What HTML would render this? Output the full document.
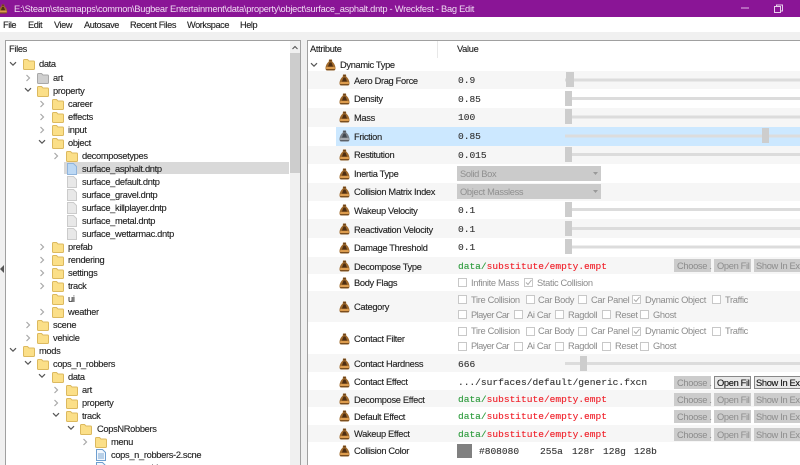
<!DOCTYPE html>
<html><head><meta charset="utf-8"><title>Bag Edit</title>
<style>
html,body{margin:0;padding:0;background:#fff;overflow:hidden;width:800px;height:465px}
svg{display:block;filter:blur(.3px)}
text{font-family:"Liberation Sans",sans-serif;font-size:9.3px;fill:#222;stroke:#222;stroke-width:.12px;letter-spacing:-.33px}
.m{font-family:"Liberation Mono",monospace;font-size:9.55px;letter-spacing:0;fill:#333;stroke:#333}
.g{fill:#2a9a3a;stroke:#2a9a3a}.r{fill:#f0202a;stroke:#f0202a}
.d{fill:#8f8f8f;stroke:none}
.b{fill:#8c8c8c;stroke:none}.k{fill:#111;stroke:#111}
.pc{letter-spacing:-.6px}
.mn{font-size:9.2px;letter-spacing:-.42px}
</style></head><body>
<svg width="800" height="465" viewBox="0 0 800 465" xmlns="http://www.w3.org/2000/svg">
<defs>
<symbol id="f" viewBox="0 0 12 12"><path d="M.5 2.500q0-1 1-1h3l1.500 1.500h4.500q1 0 1 1v6.500q0 1-1 1h-9q-1 0-1-1z" fill="#fbdf88" stroke="#dcb95e"/></symbol>
<symbol id="h" viewBox="0 0 12 12"><path d="M.5 2.500q0-1 1-1h3l1.500 1.500h4.500q1 0 1 1v6.500q0 1-1 1h-9q-1 0-1-1z" fill="#d0d0d0" stroke="#a8a8a8"/></symbol>
<symbol id="p" viewBox="0 0 10 12"><path d="M.5.500h6l3 3v8h-9z" fill="#e8e8e8" stroke="#cbcbcb"/></symbol>
<symbol id="q" viewBox="0 0 10 12"><path d="M.5.500h6l3 3v8h-9z" fill="#bcd8f4" stroke="#8fb4dc"/></symbol>
<symbol id="s" viewBox="0 0 10 12"><path d="M.5.500h6l3 3v8h-9z" fill="#f2f7fd" stroke="#6e9fd0"/><path d="M2 5h6M2 7h6M2 9h6" stroke="#7ea8d4"/></symbol>
<symbol id="a" viewBox="0 0 11 12"><path d="M4 .5h3l.3 2.300c1.700 1 3.200 4 3.200 6.700 0 1.300-.8 2-2 2h-6c-1.200 0-2-.7-2-2 0-2.700 1.500-5.700 3.200-6.700z" fill="#a06a2c"/><path d="M4.500 3.500h2l1.500 4h-5z" fill="#4e2e12"/><path d="M4.300 .7h2.400v1.600h-2.400z" fill="#6b4218"/><path d="M1.300 8h8.400l.2 2h-8.800z" fill="#dc9c4e"/><path d="M1.200 10.300h8.600v.9h-8.600z" fill="#6b4218"/></symbol>
<symbol id="z" viewBox="0 0 11 12"><path d="M4 .5h3l.3 2.300c1.700 1 3.200 4 3.200 6.700 0 1.300-.8 2-2 2h-6c-1.200 0-2-.7-2-2 0-2.700 1.500-5.700 3.200-6.700z" fill="#7a7f86"/><path d="M4.500 3.500h2l1.500 4h-5z" fill="#43484f"/><path d="M4.300 .7h2.400v1.600h-2.400z" fill="#50555c"/><path d="M1.300 8h8.400l.2 2h-8.800z" fill="#a4a8ae"/><path d="M1.200 10.300h8.600v.9h-8.600z" fill="#50555c"/></symbol>
<symbol id="v" viewBox="0 0 8 6"><path d="M1 1.200l3 3 3-3" fill="none" stroke="#555" stroke-width="1.200"/></symbol>
<symbol id="n" viewBox="0 0 6 8"><path d="M1.500 1l3 3-3 3" fill="none" stroke="#a8a8a8" stroke-width="1.200"/></symbol>
<symbol id="c" viewBox="0 0 9 9"><rect x=".5" y=".5" width="8" height="8" fill="#fff" stroke="#c8c8c8"/></symbol>
<symbol id="x" viewBox="0 0 9 9"><rect x=".5" y=".5" width="8" height="8" fill="#fff" stroke="#c8c8c8"/><path d="M2 4.500l2 2 3.500-4.500" fill="none" stroke="#aaa"/></symbol>
</defs>

<!-- title bar -->
<rect width="800" height="17" fill="#8a1596"/>
<use href="#a" x="-2" y="4" width="10" height="10"/>
<text x="14" y="12" style="fill:#f0dcf2;stroke:none;font-size:9.300px;letter-spacing:-.26px">E:\Steam\steamapps\common\Bugbear Entertainment\data\property\object\surface_asphalt.dntp - Wreckfest - Bag Edit</text>
<rect x="741" y="7.500" width="8" height="1" fill="#e0b8e4"/>
<path d="M774.500 6.500h6v6h-6zM776.500 6.500v-1.500h6v6h-2" fill="none" stroke="#e8cfeb"/>

<!-- menu -->
<rect y="17" width="800" height="15" fill="#fff"/>
<rect y="32" width="800" height="8" fill="#f0f0f0"/>
<text x="3" y="28" class="mn">File</text><text x="28" y="28" class="mn">Edit</text><text x="54" y="28" class="mn">View</text><text x="84" y="28" class="mn">Autosave</text><text x="130" y="28" class="mn">Recent Files</text><text x="187" y="28" class="mn">Workspace</text><text x="240" y="28" class="mn">Help</text>

<!-- side background -->
<rect x="0" y="40" width="5" height="425" fill="#f0f0f0"/>
<rect x="301" y="40" width="6" height="425" fill="#f0f0f0"/>
<path d="M4 265v8l-4-4z" fill="#555"/>

<!-- left panel -->
<rect x="5" y="40" width="296" height="1" fill="#a0a0a0"/>
<rect x="5" y="40" width="1" height="425" fill="#a0a0a0"/>
<rect x="300" y="40" width="1" height="425" fill="#a0a0a0"/>
<rect x="290" y="41" width="10" height="424" fill="#f0f0f0"/>
<rect x="290" y="53" width="10" height="120" fill="#cdcdcd"/>
<path d="M292.500 49l2.500-2.500 2.500 2.500" fill="none" stroke="#555" stroke-width="1.100"/>
<text x="9" y="52">Files</text>
<rect x="64" y="162" width="225" height="12" fill="#d9d9d9"/>

<use href="#v" x="9" y="61" width="8" height="6"/><use href="#f" x="23" y="58" width="12" height="12"/><text x="39" y="67">data</text>
<use href="#n" x="25" y="74" width="6" height="8"/><use href="#h" x="37" y="72" width="12" height="12"/><text x="53" y="81">art</text>
<use href="#v" x="24" y="87" width="8" height="6"/><use href="#f" x="37" y="85" width="12" height="12"/><text x="53" y="94">property</text>
<use href="#n" x="39" y="100" width="6" height="8"/><use href="#f" x="52" y="98" width="12" height="12"/><text x="68" y="107">career</text>
<use href="#n" x="39" y="113" width="6" height="8"/><use href="#f" x="52" y="111" width="12" height="12"/><text x="68" y="120">effects</text>
<use href="#n" x="39" y="126" width="6" height="8"/><use href="#f" x="52" y="124" width="12" height="12"/><text x="68" y="133">input</text>
<use href="#v" x="38" y="139" width="8" height="6"/><use href="#f" x="52" y="137" width="12" height="12"/><text x="68" y="146">object</text>
<use href="#n" x="53" y="152" width="6" height="8"/><use href="#f" x="66" y="150" width="12" height="12"/><text x="82" y="159">decomposetypes</text>
<use href="#q" x="67" y="163" width="10" height="12"/><text x="82" y="172">surface_asphalt.dntp</text>
<use href="#p" x="67" y="176" width="10" height="12"/><text x="82" y="185">surface_default.dntp</text>
<use href="#p" x="67" y="189" width="10" height="12"/><text x="82" y="198">surface_gravel.dntp</text>
<use href="#p" x="67" y="202" width="10" height="12"/><text x="82" y="211">surface_killplayer.dntp</text>
<use href="#p" x="67" y="215" width="10" height="12"/><text x="82" y="224">surface_metal.dntp</text>
<use href="#p" x="67" y="228" width="10" height="12"/><text x="82" y="237">surface_wettarmac.dntp</text>
<use href="#n" x="39" y="243" width="6" height="8"/><use href="#f" x="52" y="241" width="12" height="12"/><text x="68" y="250">prefab</text>
<use href="#n" x="39" y="256" width="6" height="8"/><use href="#f" x="52" y="254" width="12" height="12"/><text x="68" y="263">rendering</text>
<use href="#n" x="39" y="269" width="6" height="8"/><use href="#f" x="52" y="267" width="12" height="12"/><text x="68" y="276">settings</text>
<use href="#n" x="39" y="282" width="6" height="8"/><use href="#f" x="52" y="280" width="12" height="12"/><text x="68" y="289">track</text>
<use href="#f" x="52" y="293" width="12" height="12"/><text x="68" y="302">ui</text>
<use href="#n" x="39" y="308" width="6" height="8"/><use href="#f" x="52" y="306" width="12" height="12"/><text x="68" y="315">weather</text>
<use href="#n" x="25" y="321" width="6" height="8"/><use href="#f" x="37" y="319" width="12" height="12"/><text x="53" y="328">scene</text>
<use href="#n" x="25" y="334" width="6" height="8"/><use href="#f" x="37" y="332" width="12" height="12"/><text x="53" y="341">vehicle</text>
<use href="#v" x="9" y="347" width="8" height="6"/><use href="#f" x="23" y="345" width="12" height="12"/><text x="39" y="354">mods</text>
<use href="#v" x="24" y="360" width="8" height="6"/><use href="#f" x="37" y="358" width="12" height="12"/><text x="53" y="367">cops_n_robbers</text>
<use href="#v" x="38" y="373" width="8" height="6"/><use href="#f" x="52" y="371" width="12" height="12"/><text x="68" y="380">data</text>
<use href="#n" x="53" y="386" width="6" height="8"/><use href="#f" x="66" y="384" width="12" height="12"/><text x="82" y="393">art</text>
<use href="#n" x="53" y="399" width="6" height="8"/><use href="#f" x="66" y="397" width="12" height="12"/><text x="82" y="406">property</text>
<use href="#v" x="52" y="412" width="8" height="6"/><use href="#f" x="66" y="410" width="12" height="12"/><text x="82" y="419">track</text>
<use href="#v" x="67" y="425" width="8" height="6"/><use href="#f" x="80" y="423" width="12" height="12"/><text x="97" y="432">CopsNRobbers</text>
<use href="#n" x="82" y="438" width="6" height="8"/><use href="#f" x="95" y="436" width="12" height="12"/><text x="111" y="445">menu</text>
<use href="#s" x="96" y="449" width="10" height="12"/><text x="111" y="458">cops_n_robbers-2.scne</text>
<use href="#s" x="96" y="462" width="10" height="12"/><text x="111" y="471">cops_n_robbers.scne</text>

<!-- right panel -->
<rect x="307" y="40" width="493" height="1" fill="#a0a0a0"/>
<rect x="307" y="40" width="1" height="425" fill="#a0a0a0"/>
<rect x="437" y="41" width="1" height="17" fill="#e8e8e8"/>
<text x="310" y="52">Attribute</text><text x="457" y="52">Value</text>
<use href="#v" x="310" y="62" width="8" height="6"/><use href="#a" x="325" y="59" width="11" height="12"/><text x="340" y="68">Dynamic Type</text>

<!-- striped rows -->
<g fill="#f6f6f6">
<rect x="308" y="71" width="492" height="18"/><rect x="308" y="108" width="492" height="19"/><rect x="308" y="146" width="492" height="18"/><rect x="308" y="183" width="492" height="18"/><rect x="308" y="219" width="492" height="19"/><rect x="308" y="257" width="492" height="17"/><rect x="308" y="291" width="492" height="31"/><rect x="308" y="354" width="492" height="18"/><rect x="308" y="390" width="492" height="17"/><rect x="308" y="425" width="492" height="17"/>
</g>
<rect x="336" y="127" width="464" height="19" fill="#cce8ff"/>

<!-- sliders -->
<g fill="#dcdcdc">
<rect x="565" y="78.500" width="235" height="3"/><rect x="565" y="97" width="235" height="3"/><rect x="565" y="115.500" width="235" height="3"/><rect x="565" y="134.500" width="235" height="3"/><rect x="565" y="153" width="235" height="3"/><rect x="565" y="208" width="235" height="3"/><rect x="565" y="227" width="235" height="3"/><rect x="565" y="245.500" width="235" height="3"/><rect x="565" y="362" width="235" height="3"/>
</g>
<g fill="#cdcdcd">
<rect x="566" y="72" width="8" height="15"/><rect x="565" y="91" width="7" height="15"/><rect x="565" y="109" width="7" height="15"/><rect x="762" y="128" width="7" height="15"/><rect x="565" y="147" width="7" height="15"/><rect x="565" y="202" width="7" height="15"/><rect x="565" y="221" width="7" height="15"/><rect x="565" y="239" width="7" height="15"/><rect x="580" y="356" width="7" height="15"/>
</g>

<!-- attributes -->
<use href="#a" x="339" y="74" width="11" height="12"/><text x="354" y="84">Aero Drag Force</text><text class="m" x="458" y="83">0.9</text>
<use href="#a" x="339" y="93" width="11" height="12"/><text x="354" y="102">Density</text><text class="m" x="458" y="102">0.85</text>
<use href="#a" x="339" y="111" width="11" height="12"/><text x="354" y="121">Mass</text><text class="m" x="458" y="120">100</text>
<use href="#z" x="339" y="130" width="11" height="12"/><text x="354" y="140">Friction</text><text class="m" x="458" y="139">0.85</text>
<use href="#a" x="339" y="149" width="11" height="12"/><text x="354" y="158">Restitution</text><text class="m" x="458" y="158">0.015</text>
<use href="#a" x="339" y="168" width="11" height="12"/><text x="354" y="177">Inertia Type</text>
<rect x="457" y="166" width="144" height="15" fill="#cbcbcb"/><text class="d" x="460" y="177">Solid Box</text><path d="M593 172l2.500 3 2.500-3z" fill="#999"/>
<use href="#a" x="339" y="186" width="11" height="12"/><text x="354" y="195">Collision Matrix Index</text>
<rect x="457" y="184" width="144" height="15" fill="#cbcbcb"/><text class="d" x="460" y="195">Object Massless</text><path d="M593 190l2.500 3 2.500-3z" fill="#999"/>
<use href="#a" x="339" y="204" width="11" height="12"/><text x="354" y="214">Wakeup Velocity</text><text class="m" x="458" y="213">0.1</text>
<use href="#a" x="339" y="223" width="11" height="12"/><text x="354" y="233">Reactivation Velocity</text><text class="m" x="458" y="232">0.1</text>
<use href="#a" x="339" y="242" width="11" height="12"/><text x="354" y="251">Damage Threshold</text><text class="m" x="458" y="250">0.1</text>
<use href="#a" x="339" y="260" width="11" height="12"/><text x="354" y="270">Decompose Type</text><text class="m" x="458" y="269"><tspan class="g">data/</tspan><tspan class="r">substitute/empty.empt</tspan></text>
<use href="#a" x="339" y="277" width="11" height="12"/><text x="354" y="286">Body Flags</text>
<use href="#a" x="339" y="301" width="11" height="12"/><text x="354" y="310">Category</text>
<use href="#a" x="339" y="333" width="11" height="12"/><text x="354" y="342">Contact Filter</text>
<use href="#a" x="339" y="358" width="11" height="12"/><text x="354" y="367">Contact Hardness</text><text class="m" x="458" y="367">666</text>
<use href="#a" x="339" y="376" width="11" height="12"/><text x="354" y="385">Contact Effect</text><text class="m" x="458" y="385">.../surfaces/default/generic.fxcn</text>
<use href="#a" x="339" y="393" width="11" height="12"/><text x="354" y="403">Decompose Effect</text><text class="m" x="458" y="402"><tspan class="g">data/</tspan><tspan class="r">substitute/empty.empt</tspan></text>
<use href="#a" x="339" y="410" width="11" height="12"/><text x="354" y="420">Default Effect</text><text class="m" x="458" y="419"><tspan class="g">data/</tspan><tspan class="r">substitute/empty.empt</tspan></text>
<use href="#a" x="339" y="428" width="11" height="12"/><text x="354" y="437">Wakeup Effect</text><text class="m" x="458" y="437"><tspan class="g">data/</tspan><tspan class="r">substitute/empty.empt</tspan></text>
<use href="#a" x="339" y="445" width="11" height="12"/><text x="354" y="454">Collision Color</text>
<rect x="457" y="444" width="15" height="14" fill="#808080"/>
<text class="m" x="479" y="454">#808080</text><text class="m" x="540" y="454">255a</text><text class="m" x="572" y="454">128r</text><text class="m" x="603" y="454">128g</text><text class="m" x="634" y="454">128b</text>

<!-- checkboxes -->
<use href="#c" x="458" y="278" width="9" height="9"/><text class="b" x="471" y="286">Infinite Mass</text>
<use href="#x" x="524" y="278" width="9" height="9"/><text class="b" x="537" y="286">Static Collision</text>

<use href="#c" x="458" y="295" width="9" height="9"/><text class="b" x="471" y="303">Tire Collision</text>
<use href="#c" x="526" y="295" width="9" height="9"/><text class="b" x="538" y="303">Car Body</text>
<use href="#c" x="578" y="295" width="9" height="9"/><text class="b" x="591" y="303">Car Panel</text>
<use href="#x" x="632" y="295" width="9" height="9"/><text class="b" x="645" y="303">Dynamic Object</text>
<use href="#c" x="712" y="295" width="9" height="9"/><text class="b" x="725" y="303">Traffic</text>
<use href="#c" x="458" y="310" width="9" height="9"/><text class="b pc" x="471" y="318">Player Car</text>
<use href="#c" x="514" y="310" width="9" height="9"/><text class="b" x="527" y="318">Ai Car</text>
<use href="#c" x="555" y="310" width="9" height="9"/><text class="b" x="568" y="318">Ragdoll</text>
<use href="#c" x="602" y="310" width="9" height="9"/><text class="b" x="615" y="318">Reset</text>
<use href="#c" x="640" y="310" width="9" height="9"/><text class="b" x="653" y="318">Ghost</text>

<use href="#c" x="458" y="327" width="9" height="9"/><text class="b" x="471" y="334">Tire Collision</text>
<use href="#c" x="526" y="327" width="9" height="9"/><text class="b" x="538" y="334">Car Body</text>
<use href="#c" x="578" y="327" width="9" height="9"/><text class="b" x="591" y="334">Car Panel</text>
<use href="#x" x="632" y="327" width="9" height="9"/><text class="b" x="645" y="334">Dynamic Object</text>
<use href="#c" x="712" y="327" width="9" height="9"/><text class="b" x="725" y="334">Traffic</text>
<use href="#c" x="458" y="342" width="9" height="9"/><text class="b pc" x="471" y="349">Player Car</text>
<use href="#c" x="514" y="342" width="9" height="9"/><text class="b" x="527" y="349">Ai Car</text>
<use href="#c" x="555" y="342" width="9" height="9"/><text class="b" x="568" y="349">Ragdoll</text>
<use href="#c" x="602" y="342" width="9" height="9"/><text class="b" x="615" y="349">Reset</text>
<use href="#c" x="640" y="342" width="9" height="9"/><text class="b" x="653" y="349">Ghost</text>

<!-- buttons -->
<g fill="#cccccc">
<rect x="674" y="259" width="37" height="13"/><rect x="714" y="259" width="37" height="13"/><rect x="754" y="259" width="46" height="13"/>
<rect x="674" y="376" width="37" height="13"/>
<rect x="674" y="393" width="37" height="13"/><rect x="714" y="393" width="37" height="13"/><rect x="754" y="393" width="46" height="13"/>
<rect x="674" y="410" width="37" height="13"/><rect x="714" y="410" width="37" height="13"/><rect x="754" y="410" width="46" height="13"/>
<rect x="674" y="428" width="37" height="13"/><rect x="714" y="428" width="37" height="13"/><rect x="754" y="428" width="46" height="13"/>
</g>
<rect x="714.500" y="376.500" width="36" height="12" fill="#e8e8e8" stroke="#888"/>
<rect x="754.500" y="376.500" width="46" height="12" fill="#e8e8e8" stroke="#888"/>
<text class="b" x="677" y="269">Choose .</text><text class="b" x="717" y="269">Open Fil</text><text class="b" x="756" y="269">Show In Exp</text>
<text class="b" x="677" y="386">Choose .</text><text class="k" x="717" y="386">Open Fil</text><text class="k" x="756" y="386">Show In Exp</text>
<text class="b" x="677" y="403">Choose .</text><text class="b" x="717" y="403">Open Fil</text><text class="b" x="756" y="403">Show In Exp</text>
<text class="b" x="677" y="420">Choose .</text><text class="b" x="717" y="420">Open Fil</text><text class="b" x="756" y="420">Show In Exp</text>
<text class="b" x="677" y="438">Choose .</text><text class="b" x="717" y="438">Open Fil</text><text class="b" x="756" y="438">Show In Exp</text>
</svg>
</body></html>
